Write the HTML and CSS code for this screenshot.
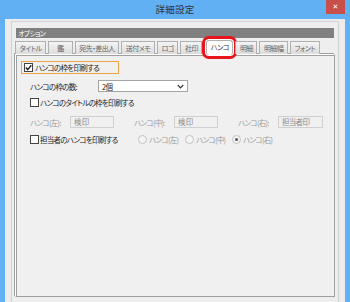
FILE: index.html
```html
<!DOCTYPE html>
<html lang="ja">
<head>
  <meta charset="UTF-8" />
  <title>詳細設定</title>
  <link rel="stylesheet" href="styles.css">
</head>
<body>
  <div class="window">
    <div class="titlebar">
      <span></span>
      <span class="title">詳細設定</span>
      <span class="close">✕</span>
    </div>
    <div class="client">
      <div class="group">
        <div class="header">オプション</div>
        <div class="tabs">
          <span class="tab">タイトル</span>
          <span class="tab wide">鑑</span>
          <span class="tab">宛先・差出人</span>
          <span class="tab">送付メモ</span>
          <span class="tab">ロゴ</span>
          <span class="tab">社印</span>
          <span class="tab active">ハンコ</span>
          <span class="tab">明細</span>
          <span class="tab">明細幅</span>
          <span class="tab">フォント</span>
        </div>
        <div class="panel">
          <div class="focus-row">
            <span class="check on">
              <svg width="7" height="7" viewBox="0 0 7 7"><path d="M0.8 3.6 L2.7 5.6 L6.3 1.2" fill="none" stroke="#222" stroke-width="1.4"/></svg>
            </span>
            <span>ハンコの枠を印刷する</span>
          </div>
          <div class="row count">
            <span class="label">ハンコの枠の数:</span>
            <span class="select">
              <span>2個</span>
              <svg width="7" height="5" viewBox="0 0 7 5"><path d="M0.8 1 L3.5 3.8 L6.2 1" fill="none" stroke="#333" stroke-width="1.2"/></svg>
            </span>
          </div>
          <div class="row">
            <span class="check"></span>
            <span>ハンコのタイトルの枠を印刷する</span>
          </div>
          <div class="row fields">
            <span class="field">
              <span class="label">ハンコ(左):</span>
              <span class="input">検 印</span>
            </span>
            <span class="field">
              <span class="label">ハンコ(中):</span>
              <span class="input">検 印</span>
            </span>
            <span class="field">
              <span class="label">ハンコ(右):</span>
              <span class="input wide">担当者印</span>
            </span>
          </div>
          <div class="row staff">
            <span class="check"></span>
            <span class="staff-label">担当者のハンコを印刷する</span>
            <span class="radio"><span class="dot"></span>ハンコ(左)</span>
            <span class="radio"><span class="dot"></span>ハンコ(中)</span>
            <span class="radio"><span class="dot on"></span>ハンコ(右)</span>
          </div>
        </div>
      </div>
    </div>
  </div>
</body>
</html>
```

FILE: styles.css
```css
* {
  box-sizing: border-box;
}
body {
  margin: 0;
  width: 350px;
  height: 302px;
  overflow: hidden;
  background: #62b0f4;
  font-family: "Noto Sans CJK JP", "Liberation Sans", sans-serif;
  font-feature-settings: "palt";
  font-size: 7.5px;
  letter-spacing: -0.7px;
  color: #222;
  white-space: nowrap;
}
.window {
  display: flex;
  flex-direction: column;
  height: 302px;
}
.titlebar {
  height: 19px;
  display: grid;
  grid-template-columns: 1fr auto 1fr;
  align-items: start;
}
.title {
  font-size: 9.5px;
  color: #333;
  line-height: 19px;
  letter-spacing: 0.3px;
}
.close {
  justify-self: end;
  margin-right: 5px;
  width: 19px;
  height: 14px;
  background: #c9504a;
  color: #fff;
  font-size: 7px;
  font-weight: bold;
  line-height: 14px;
  text-align: center;
  letter-spacing: 0;
  font-family: "DejaVu Sans", sans-serif;
}
.client {
  flex: 1;
  margin: 0 5px;
  background: #ececec;
  padding-top: 2px;
  display: flex;
  flex-direction: column;
}
.group {
  flex: 1;
  margin: 0 6px;
  border: 1px solid #d2d2d2;
  border-bottom: none;
  padding: 6px 3px 5px;
  display: flex;
  flex-direction: column;
  background: #eeeeee;
}
.header {
  margin: 0 1px;
  height: 10px;
  background: #808080;
  color: #fff;
  font-size: 7px;
  line-height: 10px;
  padding-left: 2px;
}
.tabs {
  display: flex;
  gap: 2px;
  margin-top: 3px;
  height: 13px;
  position: relative;
  z-index: 1;
}
.tab {
  flex: none;
  height: 13px;
  padding: 0 3.5px;
  border: 1px solid #b0b0b0;
  border-bottom: none;
  background: linear-gradient(#f4f4f4, #dcdcdc);
  color: #666;
  font-size: 7px;
  letter-spacing: -0.5px;
  line-height: 12px;
  text-align: center;
}
.tab.wide {
  padding: 0 8px;
}
.tab.active {
  background: #fff;
  color: #333;
  margin: -1px 0 0 2px;
  height: 15px;
  box-shadow: 0 0 0 1px #fff, 0 0 0 4px #e8141b;
  border-radius: 3px;
}
.panel {
  flex: 1;
  border: 1px solid #a0a0a0;
  border-left-color: #fff;
  border-top-color: #fff;
  box-shadow: inset 1px 1px 0 #a0a0a0, -1px -1px 0 #a0a0a0;
  background: #f0f0f0;
  padding: 6px 5px;
  display: flex;
  flex-direction: column;
}
.focus-row {
  align-self: flex-start;
  display: flex;
  align-items: center;
  gap: 1px;
  width: 98px;
  height: 13px;
  border: 1px solid #eea346;
  padding-left: 2px;
}
.check {
  flex: none;
  width: 9px;
  height: 9px;
  border: 1px solid #444;
  background: #fff;
  display: inline-flex;
  align-items: center;
  justify-content: center;
  margin-right: 1px;
}
.row {
  display: flex;
  align-items: center;
  padding-left: 9px;
}
.count {
  margin-top: 6px;
  height: 12px;
}
.count .label {
  width: 68px;
}
.select {
  width: 90px;
  height: 12px;
  border: 1px solid #a5a5a5;
  background: #fff;
  display: flex;
  align-items: center;
  justify-content: space-between;
  padding: 0 3px;
}
.count + .row {
  margin-top: 5px;
  height: 11px;
}
.fields {
  margin-top: 8px;
  height: 12px;
  color: #9a9a9a;
}
.field {
  display: flex;
  align-items: center;
  margin-right: 20px;
}
.field .label {
  width: 40px;
}
.input {
  width: 44px;
  height: 12px;
  border: 1px solid #d0d0d0;
  background: #f0f0f0;
  color: #8a8a8a;
  padding-left: 3px;
  line-height: 10px;
}
.input.wide {
  width: 45px;
}
.staff {
  margin-top: 6px;
  height: 11px;
}
.staff-label {
  width: 98px;
}
.radio {
  flex: none;
  width: 47px;
  display: flex;
  align-items: center;
  gap: 2px;
  color: #9a9a9a;
}
.dot {
  width: 9px;
  height: 9px;
  border: 1px solid #c4c4c4;
  border-radius: 50%;
  background: #f4f4f4;
  display: inline-flex;
  align-items: center;
  justify-content: center;
}
.dot.on::after {
  content: "";
  width: 3px;
  height: 3px;
  border-radius: 50%;
  background: #555;
}
```
